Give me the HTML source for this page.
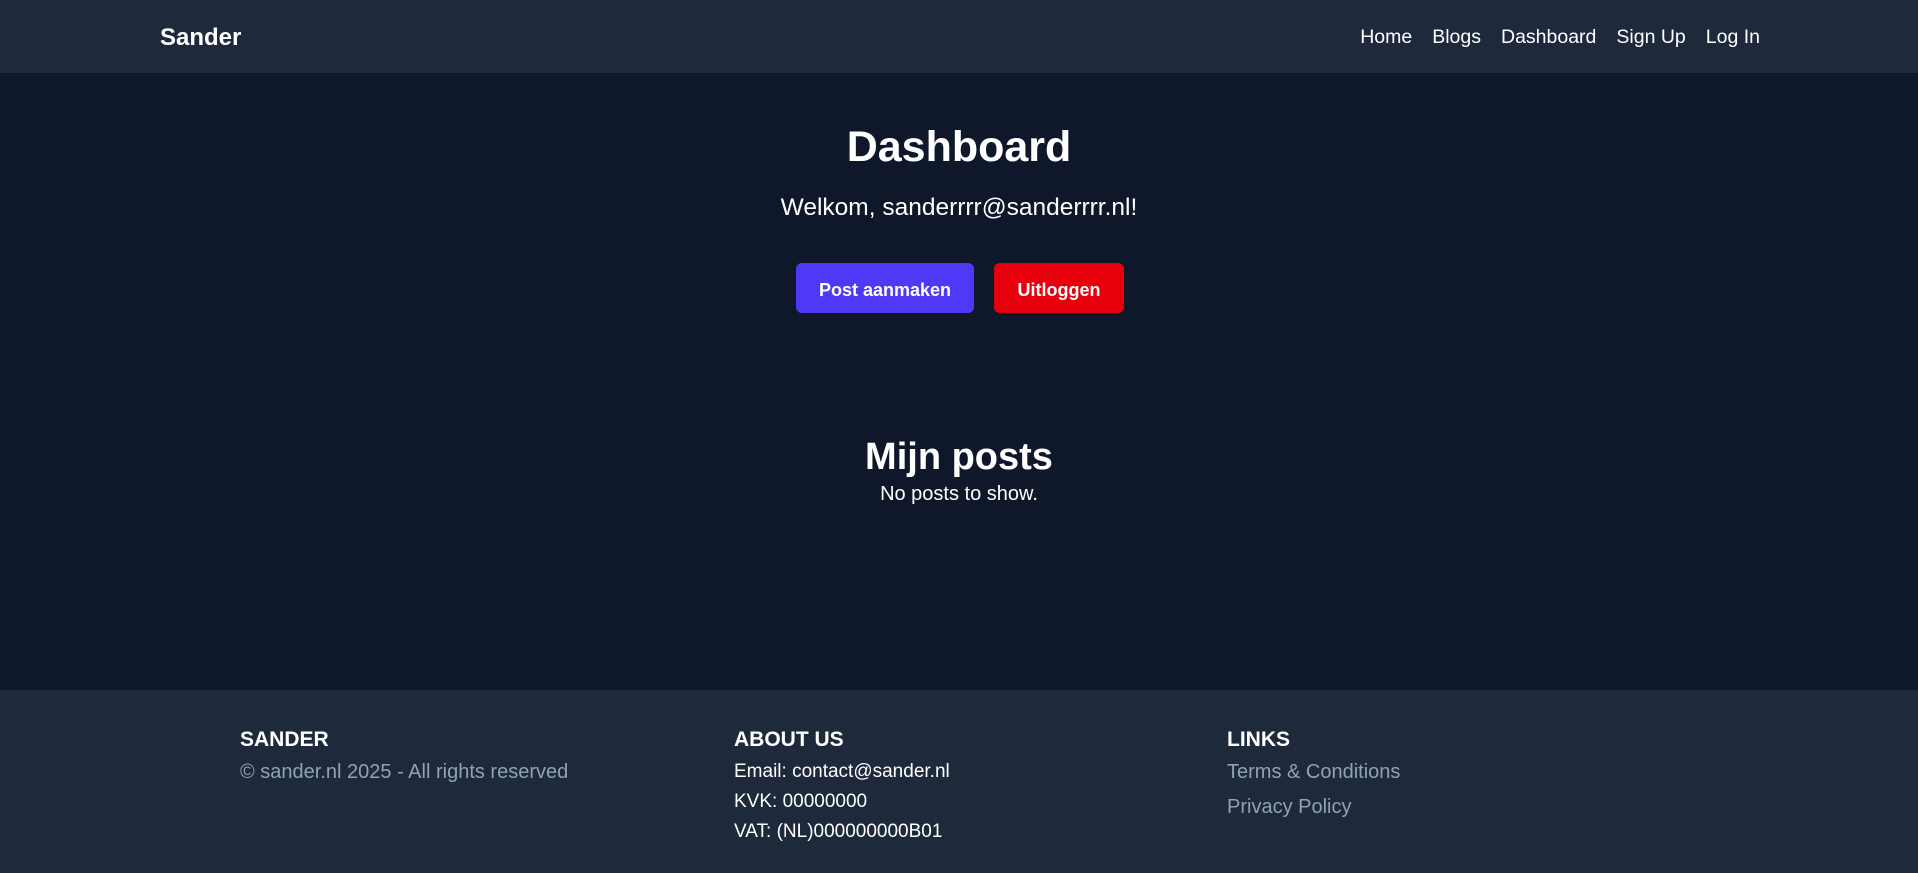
<!DOCTYPE html>
<html><head><meta charset="utf-8"><style>
*{margin:0;padding:0;box-sizing:border-box}
body{width:1918px;height:873px;background:#0f172a;color:#fff;font-family:"Liberation Sans",sans-serif;position:relative;overflow:hidden}
header{position:absolute;top:0;left:0;width:1918px;height:73px;background:#1e293b}
.logo{position:absolute;left:160px;top:24px;font-weight:bold;font-size:24px}
nav{position:absolute;right:158px;top:26px;font-size:19.5px;display:flex;gap:20px}
.c{position:absolute;left:0;width:1918px;text-align:center}
.btn{position:absolute;top:263px;height:50px;border-radius:6px;font-weight:bold;font-size:18px;line-height:54px;text-align:center}
footer{position:absolute;top:690px;left:0;width:1918px;height:183px;background:#1e293b}
.col{position:absolute;top:37px;font-size:19px;line-height:30px}
.col h3{font-size:21px;font-weight:bold;line-height:26px;margin-bottom:4px}
.g{color:#90a1b9}
</style></head><body>
<header><div class="logo">Sander</div>
<nav><span>Home</span><span>Blogs</span><span>Dashboard</span><span>Sign Up</span><span>Log In</span></nav></header>
<div class="c" style="top:123px;font-size:43px;font-weight:bold">Dashboard</div>
<div class="c" style="top:194px;font-size:24.5px">Welkom, sanderrrr@sanderrrr.nl!</div>
<div class="btn" style="left:796px;width:178px;background:#4f39f6">Post aanmaken</div>
<div class="btn" style="left:994px;width:130px;background:#e7000b">Uitloggen</div>
<div class="c" style="top:436px;font-size:38px;font-weight:bold">Mijn posts</div>
<div class="c" style="top:483px;font-size:20px">No posts to show.</div>
<footer>
<div class="col" style="left:240px"><h3>SANDER</h3><div class="g" style="font-size:20px">© sander.nl 2025 - All rights reserved</div></div>
<div class="col" style="left:734px"><h3>ABOUT US</h3><div>Email: contact@sander.nl</div><div>KVK: 00000000</div><div>VAT: (NL)000000000B01</div></div>
<div class="col" style="left:1227px"><h3>LINKS</h3><div class="g" style="margin-bottom:5px;font-size:20px">Terms &amp; Conditions</div><div class="g" style="font-size:20px">Privacy Policy</div></div>
</footer>
</body></html>
